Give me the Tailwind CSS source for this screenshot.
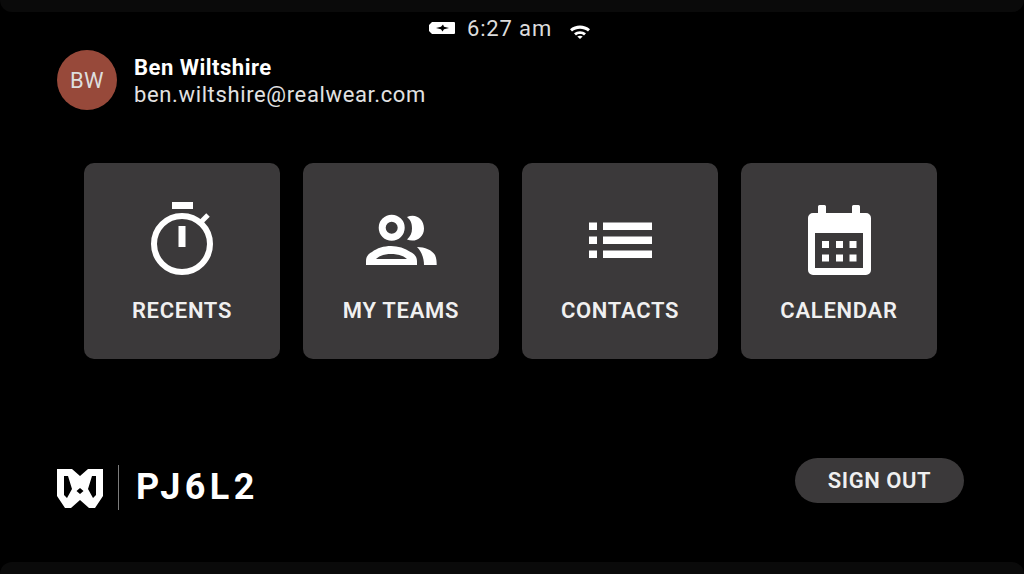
<!DOCTYPE html>
<html lang="en">
<head>
  <meta charset="UTF-8" />
  <meta name="viewport" content="width=device-width, initial-scale=1.0" />
  <title>Home</title>
  <script src="https://cdn.jsdelivr.net/npm/@tailwindcss/browser@4"></script>
</head>
<body class="bg-black text-white font-['Roboto',sans-serif] overflow-hidden">
  <div class="w-[1024px] h-[574px] flex flex-col">

    <!-- Top edge -->
    <div class="h-[12px] bg-[#0a0a0a] rounded-b-[20px]"></div>

    <!-- Status bar -->
    <div class="h-[38px] pt-[3px] pr-[5px] flex items-start justify-center">
      <div class="h-[26px] flex items-center text-[#dcdcdc]">
        <svg class="w-[26px] h-[12px] mr-[12px]" viewBox="0 0 26 12">
          <path fill="#fff" fill-rule="evenodd" d="M3 0H25a1 1 0 0 1 1 1v10a1 1 0 0 1-1 1H3L0 9V3zM7 6l5 1.200 1.500 2.300 1.500-2.300L20 6l-5-1.200-1-2.300-2 2.300z" />
        </svg>
        <span class="text-[22px] leading-[26px] tracking-[0.85px] mt-[1px]">6:27 am</span>
        <svg class="w-[20px] h-[14px] ml-[18px] mt-[7px]" viewBox="0 0 20 14">
          <path fill="#fff" d="M0 4.200C5.600-.6 14.400-.6 20 4.200l-2 2.300C13.400 2.700 6.600 2.700 2 6.500z" />
          <path fill="#fff" d="M4 8.300c3.500-2.900 8.500-2.900 12 0l-2 2.200c-2.400-1.900-5.600-1.900-8 0z" />
          <path fill="#fff" d="M7.300 11.600c1.600-1.100 3.800-1.100 5.400 0L10 14z" />
        </svg>
      </div>
    </div>

    <!-- User -->
    <div class="h-[60px] pl-[57px] flex items-center">
      <div class="w-[60px] h-[60px] rounded-full bg-[#97493a] flex items-center justify-center text-[22px] tracking-[0.5px] text-[#dedede]">BW</div>
      <div class="ml-[17px] mt-[2px]">
        <div class="text-[22px] leading-[27px] font-bold tracking-[0.5px]">Ben Wiltshire</div>
        <div class="text-[22px] leading-[27px] text-[#e2e2e2] tracking-[0.63px]">ben.wiltshire@realwear.com</div>
      </div>
    </div>

    <!-- Menu cards -->
    <div class="mt-[53px] pl-[84px] flex gap-[23px]">
      <div class="w-[196px] h-[196px] rounded-[10px] bg-[#3b393a] flex flex-col items-center">
        <svg class="w-[64px] h-[74px] mt-[38px]" viewBox="0 0 64 74">
          <rect x="22" y="1" width="21" height="7" fill="#fff" />
          <circle cx="32" cy="43" r="28" fill="none" stroke="#fff" stroke-width="6" />
          <rect x="28.500" y="25" width="7" height="21" fill="#fff" />
          <path d="M51 21l7-7" stroke="#fff" stroke-width="5" />
        </svg>
        <span class="mt-[22px] text-[22px] leading-[28px] font-semibold tracking-[0.7px] text-[#f0f0f0]">RECENTS</span>
      </div>

      <div class="w-[196px] h-[196px] rounded-[10px] bg-[#3b393a] flex flex-col items-center">
        <svg class="w-[72px] h-[74px] mt-[38px]" viewBox="0 0 72 74">
          <circle cx="26.700" cy="26.700" r="9.500" fill="none" stroke="#fff" stroke-width="7" />
          <path fill="#fff" d="M42 16C50 12 59 17 59 27.500 59 37 50 42 42 38.500 45.500 35 47 32 47 27.500 47 22 45.500 19 42 16z" />
          <path fill="#fff" fill-rule="evenodd" d="M1 64v-4c0-4 2-7 6-9 5-4 12-6 19-6s14 2 19.500 6c4 2 6.500 5 6.500 9v4zM11 58h31c-4-4-11-5-16-5s-11 1-15 5z" />
          <path fill="#fff" d="M52 46c8 0 15 3 18 8 1.500 3 1.700 7 1.700 10H59c0-6-2-13-7-18z" />
        </svg>
        <span class="mt-[22px] text-[22px] leading-[28px] font-semibold tracking-[0.7px] text-[#f0f0f0]">MY TEAMS</span>
      </div>

      <div class="w-[196px] h-[196px] rounded-[10px] bg-[#3b393a] flex flex-col items-center">
        <svg class="w-[64px] h-[74px] mt-[38px]" viewBox="0 0 64 74">
          <rect x="1" y="21.500" width="8" height="7.500" fill="#fff" />
          <rect x="1" y="35.500" width="8" height="7.500" fill="#fff" />
          <rect x="1" y="49.500" width="8" height="7.500" fill="#fff" />
          <rect x="15" y="21.500" width="49" height="7.500" fill="#fff" />
          <rect x="15" y="35.500" width="49" height="7.500" fill="#fff" />
          <rect x="15" y="49.500" width="49" height="7.500" fill="#fff" />
        </svg>
        <span class="mt-[22px] text-[22px] leading-[28px] font-semibold tracking-[0.7px] text-[#f0f0f0]">CONTACTS</span>
      </div>

      <div class="w-[196px] h-[196px] rounded-[10px] bg-[#3b393a] flex flex-col items-center">
        <svg class="w-[64px] h-[74px] mt-[38px]" viewBox="0 0 64 74">
          <path fill="#fff" fill-rule="evenodd" d="M11 5.500a1.500 1.500 0 0 1 1.500-1.500h5a1.500 1.500 0 0 1 1.500 1.500V12h26V5.500a1.500 1.500 0 0 1 1.500-1.500h5a1.500 1.500 0 0 1 1.500 1.500V12h6a5 5 0 0 1 5 5v52a5 5 0 0 1-5 5H6a5 5 0 0 1-5-5V17a5 5 0 0 1 5-5h5zM8 32v35h48V32z" />
          <g fill="#fff">
            <rect x="15" y="40" width="7" height="7" /><rect x="29" y="40" width="7" height="7" /><rect x="42.500" y="40" width="7" height="7" />
            <rect x="15" y="53.500" width="7" height="7" /><rect x="29" y="53.500" width="7" height="7" /><rect x="42.500" y="53.500" width="7" height="7" />
          </g>
        </svg>
        <span class="mt-[22px] text-[22px] leading-[28px] font-semibold tracking-[0.7px] text-[#f0f0f0]">CALENDAR</span>
      </div>
    </div>

    <!-- Footer -->
    <div class="mt-[99px] pl-[57px] pr-[60px] flex items-start justify-between">
      <div class="mt-[6px] flex items-center">
        <svg class="w-[46px] h-[39px] mt-[2px]" viewBox="0 0 46 39">
          <path fill="#fff" fill-rule="evenodd" d="M0 0h15l8 7 8-7h15v27l-8 12h-6l-9-8-9 8H8L0 27zM7 7v19l3 3 5-9-4-13zM39 7h-4l-4 13 5 9 3-3zM19.500 22l3.500 3 3.500-3-3.500-3z" />
        </svg>
        <div class="w-[1px] h-[45px] bg-[#7c7c7c] ml-[15px]"></div>
        <span class="ml-[17px] text-[36px] leading-[45px] font-bold tracking-[4.400px] mt-[1px]">PJ6L2</span>
      </div>
      <div class="w-[169px] h-[45px] rounded-full bg-[#3b393a] flex items-center justify-center text-[22px] font-semibold tracking-[0.55px] text-[#f0f0f0]">SIGN OUT</div>
    </div>

    <!-- Bottom edge -->
    <div class="mt-auto h-[12px] bg-[#0a0a0a] rounded-t-[20px]"></div>
  </div>
</body>
</html>
